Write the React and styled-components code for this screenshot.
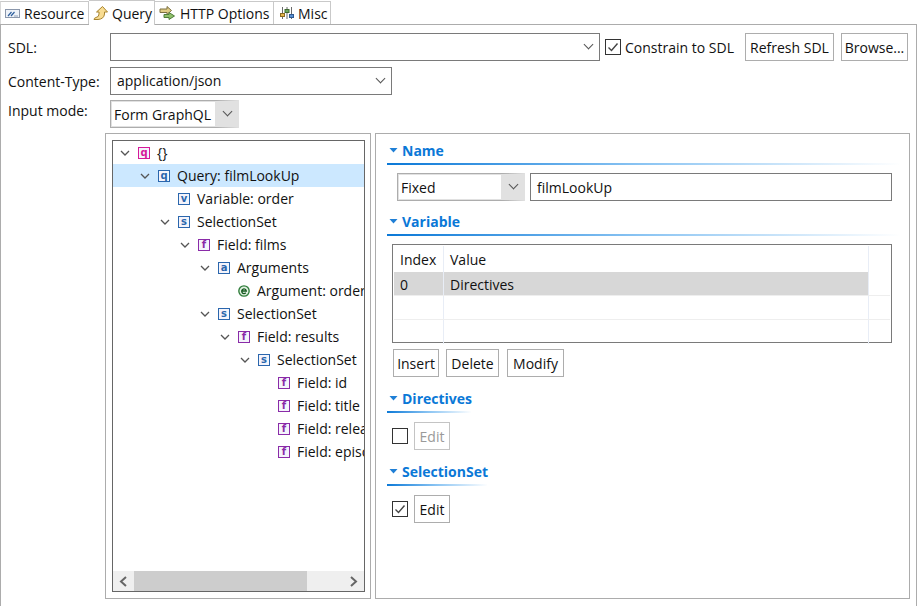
import React from 'react';
import styled, { createGlobalStyle } from 'styled-components';

const GlobalStyle = createGlobalStyle`
  html, body {
    margin: 0;
    padding: 0;
    background: #fff;
  }
  body {
    width: 917px;
    height: 606px;
    overflow: hidden;
    font-family: "Open Sans", "Noto Sans", sans-serif;
    font-size: 14px;
    color: #111;
  }
  svg {
    flex: none;
  }
`;

const tree = [
  { level: 0, open: true, kind: 'q', color: '#d6189a', label: '{}' },
  { level: 1, open: true, kind: 'q', color: '#2a66ad', label: 'Query: filmLookUp', selected: true },
  { level: 2, kind: 'v', color: '#2a66ad', label: 'Variable: order' },
  { level: 2, open: true, kind: 's', color: '#2a66ad', label: 'SelectionSet' },
  { level: 3, open: true, kind: 'f', color: '#8a2ba8', label: 'Field: films' },
  { level: 4, open: true, kind: 'a', color: '#2a66ad', label: 'Arguments' },
  { level: 5, kind: 'e', label: 'Argument: order' },
  { level: 4, open: true, kind: 's', color: '#2a66ad', label: 'SelectionSet' },
  { level: 5, open: true, kind: 'f', color: '#8a2ba8', label: 'Field: results' },
  { level: 6, open: true, kind: 's', color: '#2a66ad', label: 'SelectionSet' },
  { level: 7, kind: 'f', color: '#8a2ba8', label: 'Field: id' },
  { level: 7, kind: 'f', color: '#8a2ba8', label: 'Field: title' },
  { level: 7, kind: 'f', color: '#8a2ba8', label: 'Field: release_date' },
  { level: 7, kind: 'f', color: '#8a2ba8', label: 'Field: episode_id' },
];

function Chevron({ size = 10, color = '#555' }) {
  return (
    <svg width={size} height={size} viewBox="0 0 10 10">
      <path d="M1 3 L5 7 L9 3" fill="none" stroke={color} strokeWidth="1.3" />
    </svg>
  );
}

function CheckMark() {
  return (
    <svg width="12" height="12" viewBox="0 0 12 12">
      <path d="M1.5 6.5 L4.5 9.5 L10.5 2.5" fill="none" stroke="#444" strokeWidth="1.4" />
    </svg>
  );
}

function ResourceIcon() {
  return (
    <svg width="15" height="16" viewBox="0 0 15 16">
      <rect x="0.5" y="4.5" width="14" height="8" fill="#eef2f8" stroke="#8b97ab" />
      <path d="M3 11 L6.5 7 M6 11 L9.5 7" stroke="#2f5f9e" strokeWidth="1.2" />
      <path d="M9 11 H13" stroke="#8fa0b8" />
    </svg>
  );
}

function QueryIcon() {
  return (
    <svg width="15" height="16" viewBox="0 0 15 16">
      <path
        d="M9.5 1.5 L14.5 7 L11.5 7 L11.5 9 Q11 14 5 14.5 L1 14.5 Q1 13 3 12.5 Q6 12 6 9 L6 7 L3.5 7 Z"
        fill="#f8dc92"
        stroke="#a8842e"
      />
    </svg>
  );
}

function HttpIcon() {
  return (
    <svg width="17" height="16" viewBox="0 0 17 16">
      <path d="M1 4 H8 V1.5 L12.5 5.5 L8 9.5 V7.5 H1 Z" fill="#e0cc84" stroke="#7d7040" />
      <path d="M5 9.5 H10 V7.5 L15.5 11 L10 14.5 V12.5 H5 Z" fill="#8fc06a" stroke="#4f7c3a" />
    </svg>
  );
}

function MiscIcon() {
  return (
    <svg width="16" height="16" viewBox="-2 0 16 16">
      <path d="M2.5 2 V14 M7 2 V14 M11.5 2 V14" stroke="#6a6a6a" />
      <rect x="0.5" y="8.5" width="4" height="3" fill="#e5b64a" stroke="#8a6a20" />
      <rect x="5" y="4.5" width="4" height="3" fill="#6fa85a" stroke="#3f6a30" />
      <rect x="9.5" y="9.5" width="4" height="3" fill="#5a8fd0" stroke="#2f5a90" />
    </svg>
  );
}

function ArgumentIcon() {
  return (
    <svg width="12" height="12" viewBox="0 0 13 13">
      <circle cx="6.5" cy="6.5" r="5.6" fill="#e4f2e4" stroke="#2f7d3a" strokeWidth="1.5" />
      <path d="M4 6.5 H9 A2.5 2.5 0 1 0 8.4 8.4" fill="none" stroke="#14591f" strokeWidth="1.4" />
    </svg>
  );
}

function SectionTwisty() {
  return (
    <svg width="9" height="5" viewBox="0 0 9 5">
      <path d="M0.5 0 H8.5 L4.5 4.5 Z" fill="#1f7fd6" />
    </svg>
  );
}

export default function App() {
  return (
    <Page>
      <GlobalStyle />
      <TabBar>
        <Tab $width={89} $first>
          <ResourceIcon />
          Resource
        </Tab>
        <Tab $width={66} $active>
          <QueryIcon />
          Query
        </Tab>
        <Tab $width={119}>
          <HttpIcon />
          HTTP Options
        </Tab>
        <Tab $width={57}>
          <MiscIcon />
          Misc
        </Tab>
      </TabBar>
      <Folder>
        <FormRow $mb={6}>
          <RowLabel>SDL:</RowLabel>
          <Combo $width={490} />
          <CheckLabel>
            <CheckBox>
              <CheckMark />
            </CheckBox>
            Constrain to SDL
          </CheckLabel>
          <Button $width={89} $ml={10}>Refresh SDL</Button>
          <Button $width={67} $ml={7}>Browse...</Button>
        </FormRow>
        <FormRow $mb={5}>
          <RowLabel>Content-Type:</RowLabel>
          <Combo $width={282}>application/json</Combo>
        </FormRow>
        <FormRow $mb={5} $top>
          <RowLabel $top>Input mode:</RowLabel>
          <Select $width={129}>Form GraphQL</Select>
        </FormRow>
        <SplitRow>
          <TreeGroup>
            <TreeBox>
              <TreeRows>
                {tree.map((node, i) => (
                  <TreeRow key={i} $selected={node.selected}>
                    <TreeIndent style={{ width: node.level * 20 }} />
                    <Twisty>{node.open && <Chevron />}</Twisty>
                    {node.kind === 'e' ? (
                      <ArgumentIcon />
                    ) : (
                      <NodeIcon $color={node.color}>{node.kind}</NodeIcon>
                    )}
                    <NodeLabel>{node.label}</NodeLabel>
                  </TreeRow>
                ))}
              </TreeRows>
              <ScrollBar>
                <ScrollEnd>
                  <svg width="9" height="11" viewBox="0 0 9 11">
                    <path d="M7 1 L2 5.5 L7 10" fill="none" stroke="#666" strokeWidth="2" />
                  </svg>
                </ScrollEnd>
                <ScrollThumb />
                <ScrollEnd $end>
                  <svg width="9" height="11" viewBox="0 0 9 11">
                    <path d="M2 1 L7 5.5 L2 10" fill="none" stroke="#666" strokeWidth="2" />
                  </svg>
                </ScrollEnd>
              </ScrollBar>
            </TreeBox>
          </TreeGroup>
          <DetailGroup>
            <Section $mb={12}>
              <SectionTitle $width={513}>
                <SectionTwisty />
                Name
              </SectionTitle>
              <NameRow>
                <Select $width={128}>Fixed</Select>
                <TextInput>filmLookUp</TextInput>
              </NameRow>
            </Section>
            <Section $mb={13}>
              <SectionTitle $width={513}>
                <SectionTwisty />
                Variable
              </SectionTitle>
              <VariableTable>
                <TableRow $head>
                  <IndexCell>Index</IndexCell>
                  <ValueCell>Value</ValueCell>
                  <FillerCell />
                </TableRow>
                <TableRow $selected>
                  <IndexCell>0</IndexCell>
                  <ValueCell>Directives</ValueCell>
                  <FillerCell />
                </TableRow>
                <TableRow>
                  <IndexCell />
                  <ValueCell />
                  <FillerCell />
                </TableRow>
                <TableRow $last>
                  <IndexCell />
                  <ValueCell />
                  <FillerCell />
                </TableRow>
              </VariableTable>
              <ButtonRow>
                <Button $width={46}>Insert</Button>
                <Button $width={53} $ml={7}>Delete</Button>
                <Button $width={57} $ml={8}>Modify</Button>
              </ButtonRow>
            </Section>
            <Section $mb={13}>
              <SectionTitle $width={84}>
                <SectionTwisty />
                Directives
              </SectionTitle>
              <EditRow>
                <CheckBox />
                <Button $width={36} disabled>Edit</Button>
              </EditRow>
            </Section>
            <Section>
              <SectionTitle $width={100}>
                <SectionTwisty />
                SelectionSet
              </SectionTitle>
              <EditRow>
                <CheckBox>
                  <CheckMark />
                </CheckBox>
                <Button $width={36}>Edit</Button>
              </EditRow>
            </Section>
          </DetailGroup>
        </SplitRow>
      </Folder>
    </Page>
  );
}

const Page = styled.div`
  width: 917px;
  height: 606px;
  display: flex;
  flex-direction: column;
  overflow: hidden;
  background: #fff;
`;

const TabBar = styled.div`
  display: flex;
  height: 24px;
  flex: none;
  align-items: flex-end;
`;

const Tab = styled.div`
  box-sizing: border-box;
  display: flex;
  align-items: center;
  gap: 4px;
  flex: none;
  width: ${(p) => p.$width}px;
  height: ${(p) => (p.$active ? 25 : 23)}px;
  padding-left: 4px;
  border-right: 1px solid #c9c9c9;
  border-top: 1px solid #c9c9c9;
  border-left: ${(p) => (p.$first ? '1px solid #d8d8d8' : 'none')};
  background: #fff;
  margin-bottom: ${(p) => (p.$active ? -1 : 0)}px;
  position: relative;
  z-index: ${(p) => (p.$active ? 1 : 0)};
  white-space: nowrap;
`;

const Folder = styled.div`
  box-sizing: border-box;
  flex: 1;
  min-height: 0;
  display: flex;
  flex-direction: column;
  border: 1px solid #acacac;
  border-width: 1px 1px 0 1px;
  padding: 8px 6px 0 7px;
`;

const FormRow = styled.div`
  display: flex;
  align-items: ${(p) => (p.$top ? 'flex-start' : 'center')};
  height: 28px;
  flex: none;
  margin-bottom: ${(p) => p.$mb}px;
`;

const RowLabel = styled.div`
  width: 102px;
  flex: none;
  line-height: ${(p) => (p.$top ? '22px' : 'normal')};
`;

const Combo = styled.div`
  box-sizing: border-box;
  position: relative;
  flex: none;
  width: ${(p) => p.$width}px;
  height: 28px;
  line-height: 26px;
  padding-left: 6px;
  border: 1px solid #7a7a7a;
  background: #fff;
  &::after {
    content: '';
    position: absolute;
    right: 7px;
    top: 7px;
    width: 6px;
    height: 6px;
    border-right: 1px solid #555;
    border-bottom: 1px solid #555;
    transform: rotate(45deg);
  }
`;

const Select = styled.div`
  box-sizing: border-box;
  position: relative;
  flex: none;
  width: ${(p) => p.$width}px;
  height: 28px;
  line-height: 28px;
  padding-left: 3px;
  white-space: nowrap;
  border: 1px solid #adadad;
  border-right-width: 23px;
  border-right-color: #e1e1e1;
  background: #fff;
  box-shadow: inset 0 0 0 1px #e1e1e1;
  &::after {
    content: '';
    position: absolute;
    right: -15px;
    top: 7px;
    width: 6px;
    height: 6px;
    border-right: 1px solid #555;
    border-bottom: 1px solid #555;
    transform: rotate(45deg);
  }
`;

const CheckLabel = styled.div`
  display: flex;
  align-items: center;
  gap: 4px;
  margin-left: 5px;
  width: 130px;
  flex: none;
  white-space: nowrap;
`;

const CheckBox = styled.div`
  box-sizing: border-box;
  width: 16px;
  height: 16px;
  flex: none;
  display: flex;
  align-items: center;
  justify-content: center;
  border: 1px solid #333;
  background: #fff;
`;

const Button = styled.button`
  box-sizing: border-box;
  width: ${(p) => p.$width}px;
  height: 28px;
  flex: none;
  margin-left: ${(p) => p.$ml || 0}px;
  padding: 0;
  font: inherit;
  white-space: nowrap;
  color: ${(p) => (p.disabled ? '#9a9a9a' : '#111')};
  background: #fff;
  border: 1px solid ${(p) => (p.disabled ? '#c4c4c4' : '#adadad')};
`;

const SplitRow = styled.div`
  display: flex;
  gap: 4px;
  flex: 1;
  min-height: 0;
  margin-left: 97px;
  margin-bottom: 7px;
`;

const TreeGroup = styled.div`
  box-sizing: border-box;
  width: 266px;
  flex: none;
  display: flex;
  padding: 6px 5px 6px 6px;
  border: 1px solid #acacac;
`;

const TreeBox = styled.div`
  box-sizing: border-box;
  flex: 1;
  min-width: 0;
  display: flex;
  flex-direction: column;
  border: 1px solid #666;
`;

const TreeRows = styled.div`
  flex: 1;
  min-height: 0;
  overflow: hidden;
`;

const TreeRow = styled.div`
  display: flex;
  align-items: center;
  height: 23px;
  padding-left: 5px;
  white-space: nowrap;
  background: ${(p) => (p.$selected ? '#cce8ff' : 'transparent')};
`;

const TreeIndent = styled.span`
  flex: none;
`;

const Twisty = styled.span`
  flex: none;
  width: 13px;
  margin-right: 7px;
  display: flex;
  justify-content: center;
`;

const NodeIcon = styled.span`
  box-sizing: border-box;
  flex: none;
  width: 12px;
  height: 12px;
  border: 1px solid ${(p) => p.$color};
  color: ${(p) => p.$color};
  background: #f4f4fb;
  font-family: "DejaVu Sans", sans-serif;
  font-size: 10px;
  font-weight: 700;
  line-height: 9px;
  text-align: center;
`;

const NodeLabel = styled.span`
  margin-left: 7px;
`;

const ScrollBar = styled.div`
  flex: none;
  height: 20px;
  display: flex;
  background: #efefef;
`;

const ScrollEnd = styled.div`
  flex: none;
  width: 21px;
  margin-left: ${(p) => (p.$end ? 'auto' : 0)};
  display: flex;
  align-items: center;
  justify-content: center;
`;

const ScrollThumb = styled.div`
  width: 173px;
  flex: none;
  background: #cdcdcd;
`;

const DetailGroup = styled.div`
  box-sizing: border-box;
  flex: 1;
  min-width: 0;
  display: flex;
  flex-direction: column;
  padding: 8px 0 0 11px;
  border: 1px solid #acacac;
`;

const Section = styled.section`
  margin-bottom: ${(p) => p.$mb || 0}px;
`;

const SectionTitle = styled.div`
  box-sizing: border-box;
  display: flex;
  align-items: center;
  gap: 4px;
  width: ${(p) => p.$width}px;
  height: 23px;
  padding: 0 0 5px 2px;
  white-space: nowrap;
  font-weight: 700;
  color: #0a78d7;
  border-bottom: 2px solid;
  border-image: linear-gradient(90deg, #0a78d7, #8cc5f3 50%, #ffffff) 1;
`;

const NameRow = styled.div`
  display: flex;
  gap: 5px;
  margin: 8px 0 0 10px;
  width: 495px;
`;

const TextInput = styled.div`
  box-sizing: border-box;
  flex: 1;
  height: 28px;
  line-height: 27px;
  padding-left: 6px;
  border: 1px solid #7a7a7a;
`;

const VariableTable = styled.div`
  box-sizing: border-box;
  width: 500px;
  height: 99px;
  margin: 8px 0 0 5px;
  padding: 1px;
  border: 1px solid #7a7a7a;
`;

const TableRow = styled.div`
  box-sizing: border-box;
  display: flex;
  height: ${(p) => (p.$head ? 26 : 24)}px;
  line-height: ${(p) => (p.$head ? 27 : 25)}px;
  border-bottom: ${(p) => (p.$head || p.$last ? 'none' : '1px solid #eeeeee')};
  > :nth-child(-n + 2) {
    background: ${(p) => (p.$selected ? '#d7d7d7' : 'transparent')};
  }
`;

const IndexCell = styled.div`
  box-sizing: border-box;
  width: 50px;
  padding-left: 6px;
  border-right: 1px solid #e8edf6;
`;

const ValueCell = styled.div`
  box-sizing: border-box;
  width: 425px;
  padding-left: 6px;
  border-right: 1px solid #e8edf6;
`;

const FillerCell = styled.div`
  flex: 1;
`;

const ButtonRow = styled.div`
  display: flex;
  margin: 6px 0 0 6px;
`;

const EditRow = styled.div`
  display: flex;
  align-items: center;
  gap: 6px;
  margin: 9px 0 0 5px;
`;
